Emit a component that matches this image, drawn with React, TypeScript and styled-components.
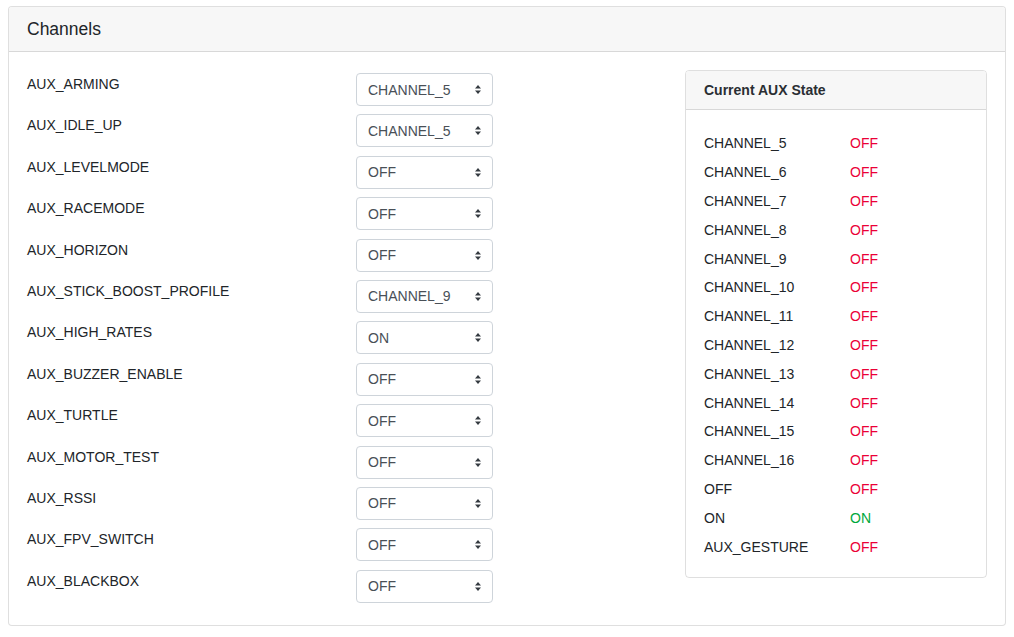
import { createGlobalStyle } from "styled-components";
import styled from "styled-components";

const GlobalStyle = createGlobalStyle`
	* {
		box-sizing: border-box;
	}
	body {
		margin: 0;
		padding: 6px 8px;
		background: #fff;
		font-family: "Liberation Sans", Arial, sans-serif;
		font-size: 14px;
		color: #212529;
	}
`;

const options = ["OFF", "ON", ...Array.from({ length: 12 }, (_, i) => `CHANNEL_${i + 5}`)];

const settings: [string, string][] = [
	["AUX_ARMING", "CHANNEL_5"],
	["AUX_IDLE_UP", "CHANNEL_5"],
	["AUX_LEVELMODE", "OFF"],
	["AUX_RACEMODE", "OFF"],
	["AUX_HORIZON", "OFF"],
	["AUX_STICK_BOOST_PROFILE", "CHANNEL_9"],
	["AUX_HIGH_RATES", "ON"],
	["AUX_BUZZER_ENABLE", "OFF"],
	["AUX_TURTLE", "OFF"],
	["AUX_MOTOR_TEST", "OFF"],
	["AUX_RSSI", "OFF"],
	["AUX_FPV_SWITCH", "OFF"],
	["AUX_BLACKBOX", "OFF"],
];

const states: [string, boolean][] = [
	...Array.from({ length: 12 }, (_, i): [string, boolean] => [`CHANNEL_${i + 5}`, false]),
	["OFF", false],
	["ON", true],
	["AUX_GESTURE", false],
];

export default function App() {
	return (
		<>
			<GlobalStyle />
			<Card>
				<CardHeader>
					<h5>Channels</h5>
				</CardHeader>
				<CardBody>
					<SettingsList>
						{settings.map(([name, value]) => (
							<SettingRow key={name}>
								<SettingLabel>{name}</SettingLabel>
								<SelectWrap>
									<Select defaultValue={value}>
										{options.map((o) => (
											<option key={o} value={o}>
												{o}
											</option>
										))}
									</Select>
									<Arrows width="8" height="11" viewBox="0 0 8 11">
										<path d="M4 1 L7 4.5 H1 Z" fill="#343a40" />
										<path d="M4 10 L7 6.5 H1 Z" fill="#343a40" />
									</Arrows>
								</SelectWrap>
							</SettingRow>
						))}
					</SettingsList>

					<StateCard>
						<StateHeader>Current AUX State</StateHeader>
						<StateBody>
							{states.map(([name, on]) => (
								<StateRow key={name}>
									<StateName>{name}</StateName>
									<StateValue $on={on}>{on ? "ON" : "OFF"}</StateValue>
								</StateRow>
							))}
						</StateBody>
					</StateCard>
				</CardBody>
			</Card>
		</>
	);
}

const Card = styled.div`
	border: 1px solid rgba(0, 0, 0, 0.125);
	border-radius: 4px;
	background: #fff;
	overflow: hidden;
`;

const CardHeader = styled.div`
	background: #f7f7f7;
	border-bottom: 1px solid rgba(0, 0, 0, 0.125);
	padding: 12px 18px;

	h5 {
		margin: 0;
		font-size: 17.5px;
		font-weight: 500;
		line-height: 20px;
		color: #212529;
	}
`;

const CardBody = styled.div`
	display: grid;
	grid-template-columns: 1fr 302px;
	align-items: start;
	padding: 18px 18px 22px;
`;

const SettingsList = styled.div`
	display: flex;
	flex-direction: column;
	gap: 8.4px;
	padding-top: 3px;
`;

const SettingRow = styled.div`
	display: flex;
	align-items: flex-start;
`;

const SettingLabel = styled.div`
	width: 329px;
	line-height: 21px;
	padding-top: 1px;
`;

const SelectWrap = styled.div`
	position: relative;
	width: 137px;
`;

const Select = styled.select`
	appearance: none;
	-webkit-appearance: none;
	width: 100%;
	height: 33px;
	padding: 0 24px 0 11px;
	border: 1px solid #ced4da;
	border-radius: 4px;
	background: #fff;
	font-family: inherit;
	font-size: 14px;
	color: #495057;
	outline: none;
`;

const Arrows = styled.svg`
	position: absolute;
	right: 11px;
	top: 11px;
	pointer-events: none;
`;

const StateCard = styled.div`
	border: 1px solid rgba(0, 0, 0, 0.125);
	border-radius: 4px;
	overflow: hidden;
`;

const StateHeader = styled.div`
	background: #f7f7f7;
	border-bottom: 1px solid rgba(0, 0, 0, 0.125);
	padding: 9px 18px;
	font-weight: 700;
	font-size: 14px;
	line-height: 20px;
	color: #2a2e33;
`;

const StateBody = styled.div`
	padding: 19px 18px 16px;
`;

const StateRow = styled.div`
	display: flex;
	height: 28.8px;
	align-items: center;
`;

const StateName = styled.div`
	width: 146px;
`;

const StateValue = styled.div<{ $on: boolean }>`
	color: ${(p) => (p.$on ? "#00a83c" : "#eb0037")};
`;
